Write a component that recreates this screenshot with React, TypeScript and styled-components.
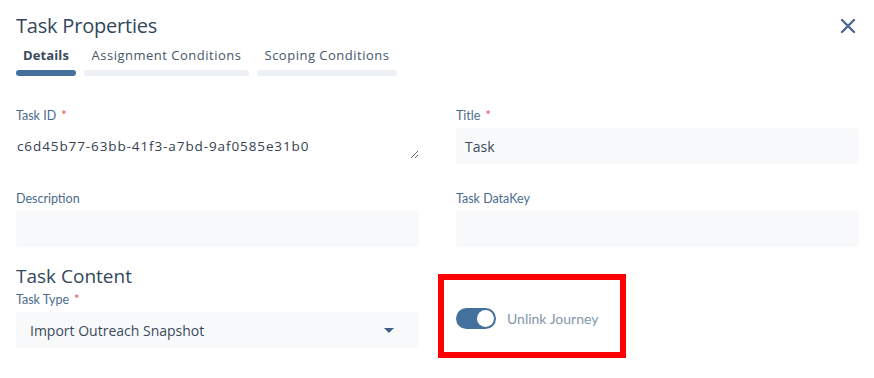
import React from "react";
import styled, { createGlobalStyle } from "styled-components";

const Global = createGlobalStyle`
  html, body { margin: 0; padding: 0; background: #ffffff; }
  body { font-family: "Open Sans", "Liberation Sans", sans-serif; }
  * { box-sizing: border-box; }
`;

const Page = styled.div`
  width: 874px;
  height: 378px;
  padding: 0 15px 0 16px;
  overflow: hidden;
`;

const Header = styled.div`
  display: flex;
  justify-content: space-between;
  align-items: center;
  padding-top: 12px;
  height: 40px;
`;

const Title = styled.h1`
  margin: 0;
  font-size: 20px;
  line-height: 30px;
  font-weight: 400;
  color: #33475b;
  letter-spacing: -0.2px;
`;

const CloseButton = styled.button`
  border: none;
  background: none;
  padding: 0;
  margin-right: 2px;
  width: 18px;
  height: 18px;
  display: flex;
  align-items: center;
  justify-content: center;
  cursor: pointer;
`;

const Tabs = styled.div`
  display: flex;
  gap: 8px;
  margin-top: 6px;
`;

const Tab = styled.div<{ $w: number }>`
  width: ${(p) => p.$w}px;
  display: flex;
  flex-direction: column;
  align-items: center;
`;

const TabLabel = styled.span<{ $active?: boolean }>`
  font-size: 13px;
  line-height: 18px;
  letter-spacing: ${(p) => (p.$active ? "0.1px" : "0.5px")};
  font-weight: ${(p) => (p.$active ? 700 : 400)};
  color: ${(p) => (p.$active ? "#3a4a5b" : "#46566a")};
`;

const TabBar = styled.div<{ $active?: boolean }>`
  margin-top: 6px;
  width: 100%;
  height: 6px;
  border-radius: 3px;
  background: ${(p) => (p.$active ? "#44709e" : "#edf1f5")};
`;

const FormGrid = styled.div`
  display: grid;
  grid-template-columns: 403px 403px;
  column-gap: 37px;
  row-gap: 27px;
  margin-top: 32px;
`;

const Field = styled.div`
  display: flex;
  flex-direction: column;
  gap: 5px;
`;

const Label = styled.label`
  display: block;
  font-family: "Lato", "Open Sans", sans-serif;
  font-size: 12.5px;
  line-height: 15px;
  color: #4a6b8e;
`;

const Req = styled.span`
  color: #e8494f;
  margin-left: 5px;
`;

const Input = styled.div`
  height: 36px;
  background: #f7f9fb;
  border-radius: 4px;
  padding: 0 9px;
  display: flex;
  align-items: center;
  font-size: 14px;
  color: #3b4a5a;
`;

const IdArea = styled.textarea`
  height: 31px;
  border: none;
  outline: none;
  background: transparent;
  padding: 9px 1px 0 1px;
  font-family: "Open Sans", sans-serif;
  font-size: 13.5px;
  line-height: 18px;
  letter-spacing: 0.9px;
  color: #34424f;
  resize: vertical;
  overflow: hidden;
`;

const ContentRow = styled.div`
  display: grid;
  grid-template-columns: 403px 403px;
  column-gap: 37px;
  margin-top: 17px;
`;

const SectionTitle = styled.h2`
  margin: 0 0 4px;
  font-size: 19px;
  line-height: 24px;
  font-weight: 400;
  color: #33475b;
`;

const Select = styled.div`
  height: 36px;
  margin-top: 5px;
  background: #f7f9fb;
  border-radius: 4px;
  padding: 0 25px 0 14px;
  display: flex;
  align-items: center;
  justify-content: space-between;
  font-size: 14px;
  color: #3b4a5a;
`;

const Highlight = styled.div`
  align-self: start;
  margin: 10px 0 0 -18px;
  width: 188px;
  height: 84px;
  border: 6px solid #ff0000;
  padding: 28px 0 0 12px;
  display: flex;
  align-items: flex-start;
  gap: 11px;
`;

const Toggle = styled.div<{ $on?: boolean }>`
  width: 40px;
  height: 21px;
  border-radius: 11px;
  background: ${(p) => (p.$on ? "#44709e" : "#c5ced8")};
  display: flex;
  align-items: center;
  justify-content: ${(p) => (p.$on ? "flex-end" : "flex-start")};
  padding: 0 2px;
`;

const Knob = styled.div`
  width: 17px;
  height: 17px;
  border-radius: 50%;
  background: #ffffff;
`;

const ToggleLabel = styled.span`
  font-family: "Lato", "Open Sans", sans-serif;
  font-size: 14px;
  line-height: 21px;
  color: #8297ad;
`;

export default function App() {
  return (
    <>
      <Global />
      <Page>
        <Header>
          <Title>Task Properties</Title>
          <CloseButton aria-label="Close">
            <svg width="16" height="16" viewBox="0 0 16 16">
              <path d="M2 2 L14 14 M14 2 L2 14" stroke="#4b6b8c" strokeWidth="2.4" strokeLinecap="round" />
            </svg>
          </CloseButton>
        </Header>
        <Tabs>
          <Tab $w={60}>
            <TabLabel $active>Details</TabLabel>
            <TabBar $active />
          </Tab>
          <Tab $w={165}>
            <TabLabel>Assignment Conditions</TabLabel>
            <TabBar />
          </Tab>
          <Tab $w={140}>
            <TabLabel>Scoping Conditions</TabLabel>
            <TabBar />
          </Tab>
        </Tabs>
        <FormGrid>
          <Field>
            <Label>
              Task ID<Req>*</Req>
            </Label>
            <IdArea readOnly value="c6d45b77-63bb-41f3-a7bd-9af0585e31b0" />
          </Field>
          <Field>
            <Label>
              Title<Req>*</Req>
            </Label>
            <Input>Task</Input>
          </Field>
          <Field>
            <Label>Description</Label>
            <Input />
          </Field>
          <Field>
            <Label>Task DataKey</Label>
            <Input />
          </Field>
        </FormGrid>
        <ContentRow>
          <div>
            <SectionTitle>Task Content</SectionTitle>
            <Label>
              Task Type<Req>*</Req>
            </Label>
            <Select>
              <span>Import Outreach Snapshot</span>
              <svg width="10" height="5" viewBox="0 0 10 5">
                <path d="M0 0 H10 L5 5 Z" fill="#3f5f80" />
              </svg>
            </Select>
          </div>
          <Highlight>
            <Toggle $on>
              <Knob />
            </Toggle>
            <ToggleLabel>Unlink Journey</ToggleLabel>
          </Highlight>
        </ContentRow>
      </Page>
    </>
  );
}
